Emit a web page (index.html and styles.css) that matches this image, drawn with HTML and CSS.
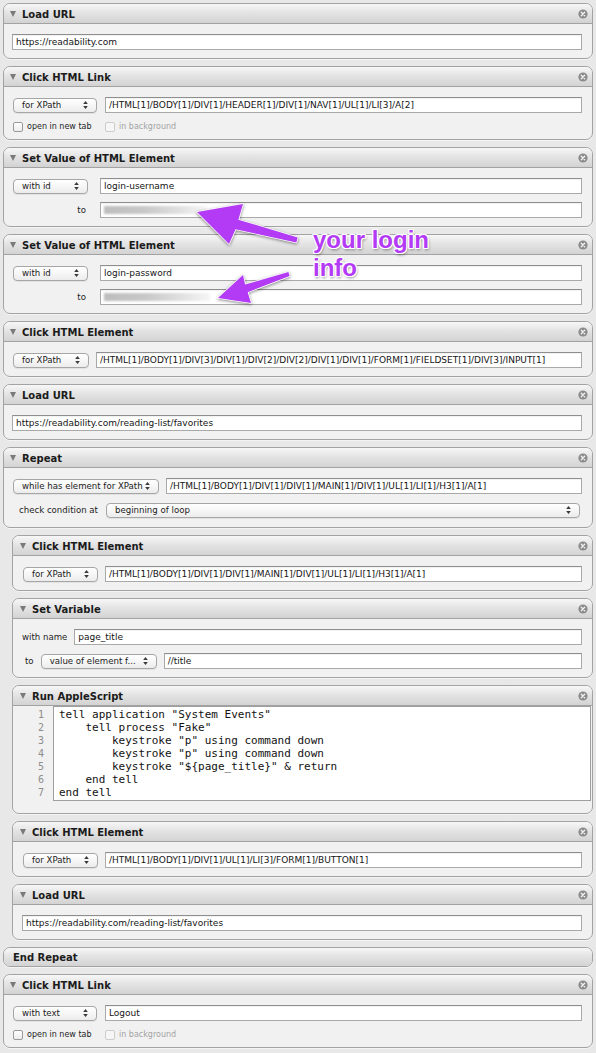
FILE: index.html
```html
<!DOCTYPE html>
<html>
<head>
<meta charset="utf-8">
<link rel="stylesheet" href="styles.css">
</head>
<body>
<div class="page">

  <section class="card">
    <div class="head"><span class="tri"></span><span class="title">Load URL</span><span class="close"><svg viewBox="0 0 10 10" width="10" height="10"><circle cx="5" cy="5" r="4.6" fill="#8b8b8b"/><path d="M3.3 3.3l3.4 3.4M6.7 3.3l-3.4 3.4" stroke="#f2f2f2" stroke-width="1.3" stroke-linecap="round"/></svg></span></div>
    <div class="body">
      <div class="row"><div class="field">https://readability.com</div></div>
    </div>
  </section>

  <section class="card">
    <div class="head"><span class="tri"></span><span class="title">Click HTML Link</span><span class="close"><svg viewBox="0 0 10 10" width="10" height="10"><circle cx="5" cy="5" r="4.6" fill="#8b8b8b"/><path d="M3.3 3.3l3.4 3.4M6.7 3.3l-3.4 3.4" stroke="#f2f2f2" stroke-width="1.3" stroke-linecap="round"/></svg></span></div>
    <div class="body link">
      <div class="grid g-link">
        <div class="pop">for XPath<svg class="updn" viewBox="0 0 5 8" width="5" height="8"><path d="M2.5 0L4.8 3H.2zM2.5 8L4.8 5H.2z"/></svg></div>
        <div class="field">/HTML[1]/BODY[1]/DIV[1]/HEADER[1]/DIV[1]/NAV[1]/UL[1]/LI[3]/A[2]</div>
        <label class="chk"><span class="box"></span>open in new tab</label>
        <label class="chk dis"><span class="box"></span>in background</label>
      </div>
    </div>
  </section>

  <section class="card">
    <div class="head"><span class="tri"></span><span class="title">Set Value of HTML Element</span><span class="close"><svg viewBox="0 0 10 10" width="10" height="10"><circle cx="5" cy="5" r="4.6" fill="#8b8b8b"/><path d="M3.3 3.3l3.4 3.4M6.7 3.3l-3.4 3.4" stroke="#f2f2f2" stroke-width="1.3" stroke-linecap="round"/></svg></span></div>
    <div class="body">
      <div class="grid g-set">
        <div class="pop">with id<svg class="updn" viewBox="0 0 5 8" width="5" height="8"><path d="M2.5 0L4.8 3H.2zM2.5 8L4.8 5H.2z"/></svg></div>
        <div class="field">login-username</div>
        <span class="lbl to">to</span>
        <div class="field"><span class="blur b1"></span></div>
      </div>
    </div>
  </section>

  <section class="card">
    <div class="head"><span class="tri"></span><span class="title">Set Value of HTML Element</span><span class="close"><svg viewBox="0 0 10 10" width="10" height="10"><circle cx="5" cy="5" r="4.6" fill="#8b8b8b"/><path d="M3.3 3.3l3.4 3.4M6.7 3.3l-3.4 3.4" stroke="#f2f2f2" stroke-width="1.3" stroke-linecap="round"/></svg></span></div>
    <div class="body">
      <div class="grid g-set">
        <div class="pop">with id<svg class="updn" viewBox="0 0 5 8" width="5" height="8"><path d="M2.5 0L4.8 3H.2zM2.5 8L4.8 5H.2z"/></svg></div>
        <div class="field">login-password</div>
        <span class="lbl to">to</span>
        <div class="field"><span class="blur b2"></span></div>
      </div>
    </div>
  </section>

  <section class="card">
    <div class="head"><span class="tri"></span><span class="title">Click HTML Element</span><span class="close"><svg viewBox="0 0 10 10" width="10" height="10"><circle cx="5" cy="5" r="4.6" fill="#8b8b8b"/><path d="M3.3 3.3l3.4 3.4M6.7 3.3l-3.4 3.4" stroke="#f2f2f2" stroke-width="1.3" stroke-linecap="round"/></svg></span></div>
    <div class="body">
      <div class="row">
        <div class="pop w76">for XPath<svg class="updn" viewBox="0 0 5 8" width="5" height="8"><path d="M2.5 0L4.8 3H.2zM2.5 8L4.8 5H.2z"/></svg></div>
        <div class="field">/HTML[1]/BODY[1]/DIV[3]/DIV[1]/DIV[2]/DIV[2]/DIV[1]/DIV[1]/FORM[1]/FIELDSET[1]/DIV[3]/INPUT[1]</div>
      </div>
    </div>
  </section>

  <section class="card">
    <div class="head"><span class="tri"></span><span class="title">Load URL</span><span class="close"><svg viewBox="0 0 10 10" width="10" height="10"><circle cx="5" cy="5" r="4.6" fill="#8b8b8b"/><path d="M3.3 3.3l3.4 3.4M6.7 3.3l-3.4 3.4" stroke="#f2f2f2" stroke-width="1.3" stroke-linecap="round"/></svg></span></div>
    <div class="body">
      <div class="row"><div class="field">https://readability.com/reading-list/favorites</div></div>
    </div>
  </section>

  <section class="card tall">
    <div class="head"><span class="tri"></span><span class="title">Repeat</span><span class="close"><svg viewBox="0 0 10 10" width="10" height="10"><circle cx="5" cy="5" r="4.6" fill="#8b8b8b"/><path d="M3.3 3.3l3.4 3.4M6.7 3.3l-3.4 3.4" stroke="#f2f2f2" stroke-width="1.3" stroke-linecap="round"/></svg></span></div>
    <div class="body">
      <div class="row">
        <div class="pop w146">while has element for XPath<svg class="updn" viewBox="0 0 5 8" width="5" height="8"><path d="M2.5 0L4.8 3H.2zM2.5 8L4.8 5H.2z"/></svg></div>
        <div class="field">/HTML[1]/BODY[1]/DIV[1]/DIV[1]/MAIN[1]/DIV[1]/UL[1]/LI[1]/H3[1]/A[1]</div>
      </div>
      <div class="row">
        <span class="lbl cond">check condition at</span>
        <div class="pop grow">beginning of loop<svg class="updn" viewBox="0 0 5 8" width="5" height="8"><path d="M2.5 0L4.8 3H.2zM2.5 8L4.8 5H.2z"/></svg></div>
      </div>
    </div>
  </section>

  <section class="card indent">
    <div class="head"><span class="tri"></span><span class="title">Click HTML Element</span><span class="close"><svg viewBox="0 0 10 10" width="10" height="10"><circle cx="5" cy="5" r="4.6" fill="#8b8b8b"/><path d="M3.3 3.3l3.4 3.4M6.7 3.3l-3.4 3.4" stroke="#f2f2f2" stroke-width="1.3" stroke-linecap="round"/></svg></span></div>
    <div class="body">
      <div class="row">
        <div class="pop w75">for XPath<svg class="updn" viewBox="0 0 5 8" width="5" height="8"><path d="M2.5 0L4.8 3H.2zM2.5 8L4.8 5H.2z"/></svg></div>
        <div class="field">/HTML[1]/BODY[1]/DIV[1]/DIV[1]/MAIN[1]/DIV[1]/UL[1]/LI[1]/H3[1]/A[1]</div>
      </div>
    </div>
  </section>

  <section class="card indent">
    <div class="head"><span class="tri"></span><span class="title">Set Variable</span><span class="close"><svg viewBox="0 0 10 10" width="10" height="10"><circle cx="5" cy="5" r="4.6" fill="#8b8b8b"/><path d="M3.3 3.3l3.4 3.4M6.7 3.3l-3.4 3.4" stroke="#f2f2f2" stroke-width="1.3" stroke-linecap="round"/></svg></span></div>
    <div class="body">
      <div class="row">
        <span class="lbl">with name</span>
        <div class="field">page_title</div>
      </div>
      <div class="row">
        <span class="lbl to2">to</span>
        <div class="pop w116">value of element f...<svg class="updn" viewBox="0 0 5 8" width="5" height="8"><path d="M2.5 0L4.8 3H.2zM2.5 8L4.8 5H.2z"/></svg></div>
        <div class="field">//title</div>
      </div>
    </div>
  </section>

  <section class="card indent">
    <div class="head"><span class="tri"></span><span class="title">Run AppleScript</span><span class="close"><svg viewBox="0 0 10 10" width="10" height="10"><circle cx="5" cy="5" r="4.6" fill="#8b8b8b"/><path d="M3.3 3.3l3.4 3.4M6.7 3.3l-3.4 3.4" stroke="#f2f2f2" stroke-width="1.3" stroke-linecap="round"/></svg></span></div>
    <div class="script">
      <div class="gutter">1<br>2<br>3<br>4<br>5<br>6<br>7</div>
      <div class="code">tell application "System Events"
    tell process "Fake"
        keystroke "p" using command down
        keystroke "p" using command down
        keystroke "${page_title}" &amp; return
    end tell
end tell</div>
    </div>
    <div class="foot"></div>
  </section>

  <section class="card indent">
    <div class="head"><span class="tri"></span><span class="title">Click HTML Element</span><span class="close"><svg viewBox="0 0 10 10" width="10" height="10"><circle cx="5" cy="5" r="4.6" fill="#8b8b8b"/><path d="M3.3 3.3l3.4 3.4M6.7 3.3l-3.4 3.4" stroke="#f2f2f2" stroke-width="1.3" stroke-linecap="round"/></svg></span></div>
    <div class="body">
      <div class="row">
        <div class="pop w75">for XPath<svg class="updn" viewBox="0 0 5 8" width="5" height="8"><path d="M2.5 0L4.8 3H.2zM2.5 8L4.8 5H.2z"/></svg></div>
        <div class="field">/HTML[1]/BODY[1]/DIV[1]/UL[1]/LI[3]/FORM[1]/BUTTON[1]</div>
      </div>
    </div>
  </section>

  <section class="card indent">
    <div class="head"><span class="tri"></span><span class="title">Load URL</span><span class="close"><svg viewBox="0 0 10 10" width="10" height="10"><circle cx="5" cy="5" r="4.6" fill="#8b8b8b"/><path d="M3.3 3.3l3.4 3.4M6.7 3.3l-3.4 3.4" stroke="#f2f2f2" stroke-width="1.3" stroke-linecap="round"/></svg></span></div>
    <div class="body">
      <div class="row"><div class="field">https://readability.com/reading-list/favorites</div></div>
    </div>
  </section>

  <section class="card end">
    <div class="head"><span class="title">End Repeat</span></div>
  </section>

  <section class="card">
    <div class="head"><span class="tri"></span><span class="title">Click HTML Link</span><span class="close"><svg viewBox="0 0 10 10" width="10" height="10"><circle cx="5" cy="5" r="4.6" fill="#8b8b8b"/><path d="M3.3 3.3l3.4 3.4M6.7 3.3l-3.4 3.4" stroke="#f2f2f2" stroke-width="1.3" stroke-linecap="round"/></svg></span></div>
    <div class="body link">
      <div class="grid g-link">
        <div class="pop">with text<svg class="updn" viewBox="0 0 5 8" width="5" height="8"><path d="M2.5 0L4.8 3H.2zM2.5 8L4.8 5H.2z"/></svg></div>
        <div class="field">Logout</div>
        <label class="chk"><span class="box"></span>open in new tab</label>
        <label class="chk dis"><span class="box"></span>in background</label>
      </div>
    </div>
  </section>

  <svg class="arrows" width="596" height="1053" viewBox="0 0 596 1053">
    <polygon points="197,212 243,204 238.4,219.7 297.7,237.6 296.3,242.4 235.6,229.3 229,244"/>
    <polygon points="218,298 243,275 245.1,284.6 288.4,272.1 289.6,275.9 247.7,292.2 251,303"/>
  </svg>
  <div class="note">your login<br>info</div>
</div>
</body>
</html>
```

FILE: styles.css
```css
* { box-sizing: border-box; }

body {
  margin: 0;
  background: #e8e8e8;
  font-family: "DejaVu Sans", "Liberation Sans", sans-serif;
  color: #1e1e1e;
}

.page {
  position: relative;
  width: 596px;
  height: 1053px;
  padding: 3px 3px 0 3px;
  overflow: hidden;
}

.card {
  background: #f1f1f1;
  border: 1px solid #a3a3a3;
  border-radius: 7px;
  margin-bottom: 7px;
  box-shadow: 0 1px 0 rgba(255,255,255,0.5);
}

.card.indent { margin-left: 9px; }

.head {
  display: flex;
  align-items: center;
  height: 20px;
  padding: 1px 4px 0 6px;
  border-bottom: 1px solid #a2a2a2;
  border-radius: 6px 6px 0 0;
  background: linear-gradient(#f7f7f7, #e4e4e4 45%, #d3d3d3);
}

.indent .head { padding-left: 7px; }

.tri {
  width: 0;
  height: 0;
  border-left: 3.5px solid transparent;
  border-right: 3.5px solid transparent;
  border-top: 6px solid #7a7a7a;
  margin-right: 6px;
}

.title {
  font-weight: bold;
  font-size: 10px;
  color: #1b1b1b;
}

.close { margin-left: auto; display: flex; margin-top: -1px; }

.card.end .head {
  height: 18px;
  border-bottom: 0;
  border-radius: 6px;
  padding-left: 9px;
}

.body { padding: 10px 10px 8px 8px; }
.indent .body { padding-left: 9px; }
.card.tall .body { padding-bottom: 9px; }
.body.link { padding-bottom: 7px; }

.row {
  display: flex;
  align-items: center;
  gap: 7px;
  height: 16px;
}
.row + .row { margin-top: 8px; }

.grid {
  display: grid;
  align-items: center;
  row-gap: 8px;
}
.g-link {
  grid-template-columns: 85px 1fr;
  grid-template-rows: 16px 10px;
  column-gap: 8px;
  row-gap: 9px;
}
.g-set {
  grid-template-columns: 76px 1fr;
  grid-template-rows: 16px 16px;
  column-gap: 12px;
}

.field {
  flex: 1;
  min-width: 0;
  height: 16px;
  background: #fff;
  border: 1px solid #a9a9a9;
  border-top-color: #8e8e8e;
  padding: 0 3px;
  font-size: 9px;
  line-height: 14px;
  white-space: nowrap;
  overflow: hidden;
  color: #151515;
  box-shadow: inset 0 1px 0 rgba(0,0,0,0.05);
}

.pop {
  display: flex;
  align-items: center;
  justify-content: space-between;
  height: 15px;
  margin-left: 1px;
  padding: 0 8px 0 8px;
  border: 1px solid #a6a6a6;
  border-radius: 4px;
  background: linear-gradient(#ffffff, #f6f6f6 50%, #ececec);
  box-shadow: 0 1px 0 rgba(0,0,0,0.06);
  font-size: 8.6px;
  white-space: nowrap;
  color: #1b1b1b;
}
.pop .updn { fill: #3a3a3a; flex: none; }

.w75 { width: 75px; flex: none; }
.w76 { width: 76px; flex: none; }
.w116 { width: 116px; flex: none; margin-left: 0; }
.w146 { width: 146px; flex: none; }
.grow { flex: 1; margin-right: 2px; margin-left: 0; }

.lbl {
  font-size: 8.6px;
  white-space: nowrap;
  color: #1e1e1e;
}
.lbl.to { justify-self: end; padding-right: 2px; }
.lbl.to2 { padding-left: 3px; margin-right: 0; }
.lbl.cond { padding-left: 7px; margin-right: 1px; }

.chk {
  display: flex;
  align-items: center;
  gap: 4px;
  font-size: 8px;
  line-height: 10px;
  white-space: nowrap;
  color: #1e1e1e;
}
.chk .box {
  width: 10px;
  height: 10px;
  margin-left: 1px;
  border: 1px solid #9a9a9a;
  border-radius: 2px;
  background: linear-gradient(#ffffff, #ececec);
}
.chk.dis { color: #a3a3a3; }
.chk.dis .box { margin-left: 0; border-color: #cdcdcd; background: #f6f6f6; }

.blur {
  display: block;
  height: 8px;
  margin-top: 3px;
  background: linear-gradient(90deg, #bdbdbd 0, #c8c8c8 40%, #e2e2e2 75%, #f6f6f6 100%);
  filter: blur(1.1px);
}
.b1 { width: 103px; }
.b2 { width: 106px; }

.script { display: flex; }
.gutter {
  width: 40px;
  padding: 2px 9px 0 0;
  text-align: right;
  font-family: "DejaVu Sans Mono", monospace;
  font-size: 10px;
  line-height: 13px;
  color: #8d8d8d;
}
.code {
  flex: 1;
  height: 95px;
  margin-right: 1px;
  background: #fff;
  border: 1px solid #9f9f9f;
  padding: 1px 5px;
  font-family: "DejaVu Sans Mono", monospace;
  font-size: 11px;
  line-height: 13px;
  white-space: pre;
  color: #121212;
}
.foot { height: 12px; }

.arrows {
  position: absolute;
  left: 0;
  top: 0;
  pointer-events: none;
  filter: drop-shadow(0 1px 1.5px rgba(0,0,0,0.45));
}
.arrows polygon {
  fill: #b33bf5;
  stroke: #ffffff;
  stroke-width: 1.6;
  stroke-linejoin: round;
  paint-order: stroke;
}

.note {
  position: absolute;
  left: 313px;
  top: 226px;
  font-family: "Liberation Sans", sans-serif;
  font-weight: bold;
  font-size: 24px;
  line-height: 28px;
  color: #b33bf5;
  text-shadow:
    1px 0 0 #fff, -1px 0 0 #fff, 0 1px 0 #fff, 0 -1px 0 #fff,
    1px 1px 0 #fff, -1px -1px 0 #fff, 1px -1px 0 #fff, -1px 1px 0 #fff,
    1px 2px 3px rgba(0,0,0,0.45);
}
```
